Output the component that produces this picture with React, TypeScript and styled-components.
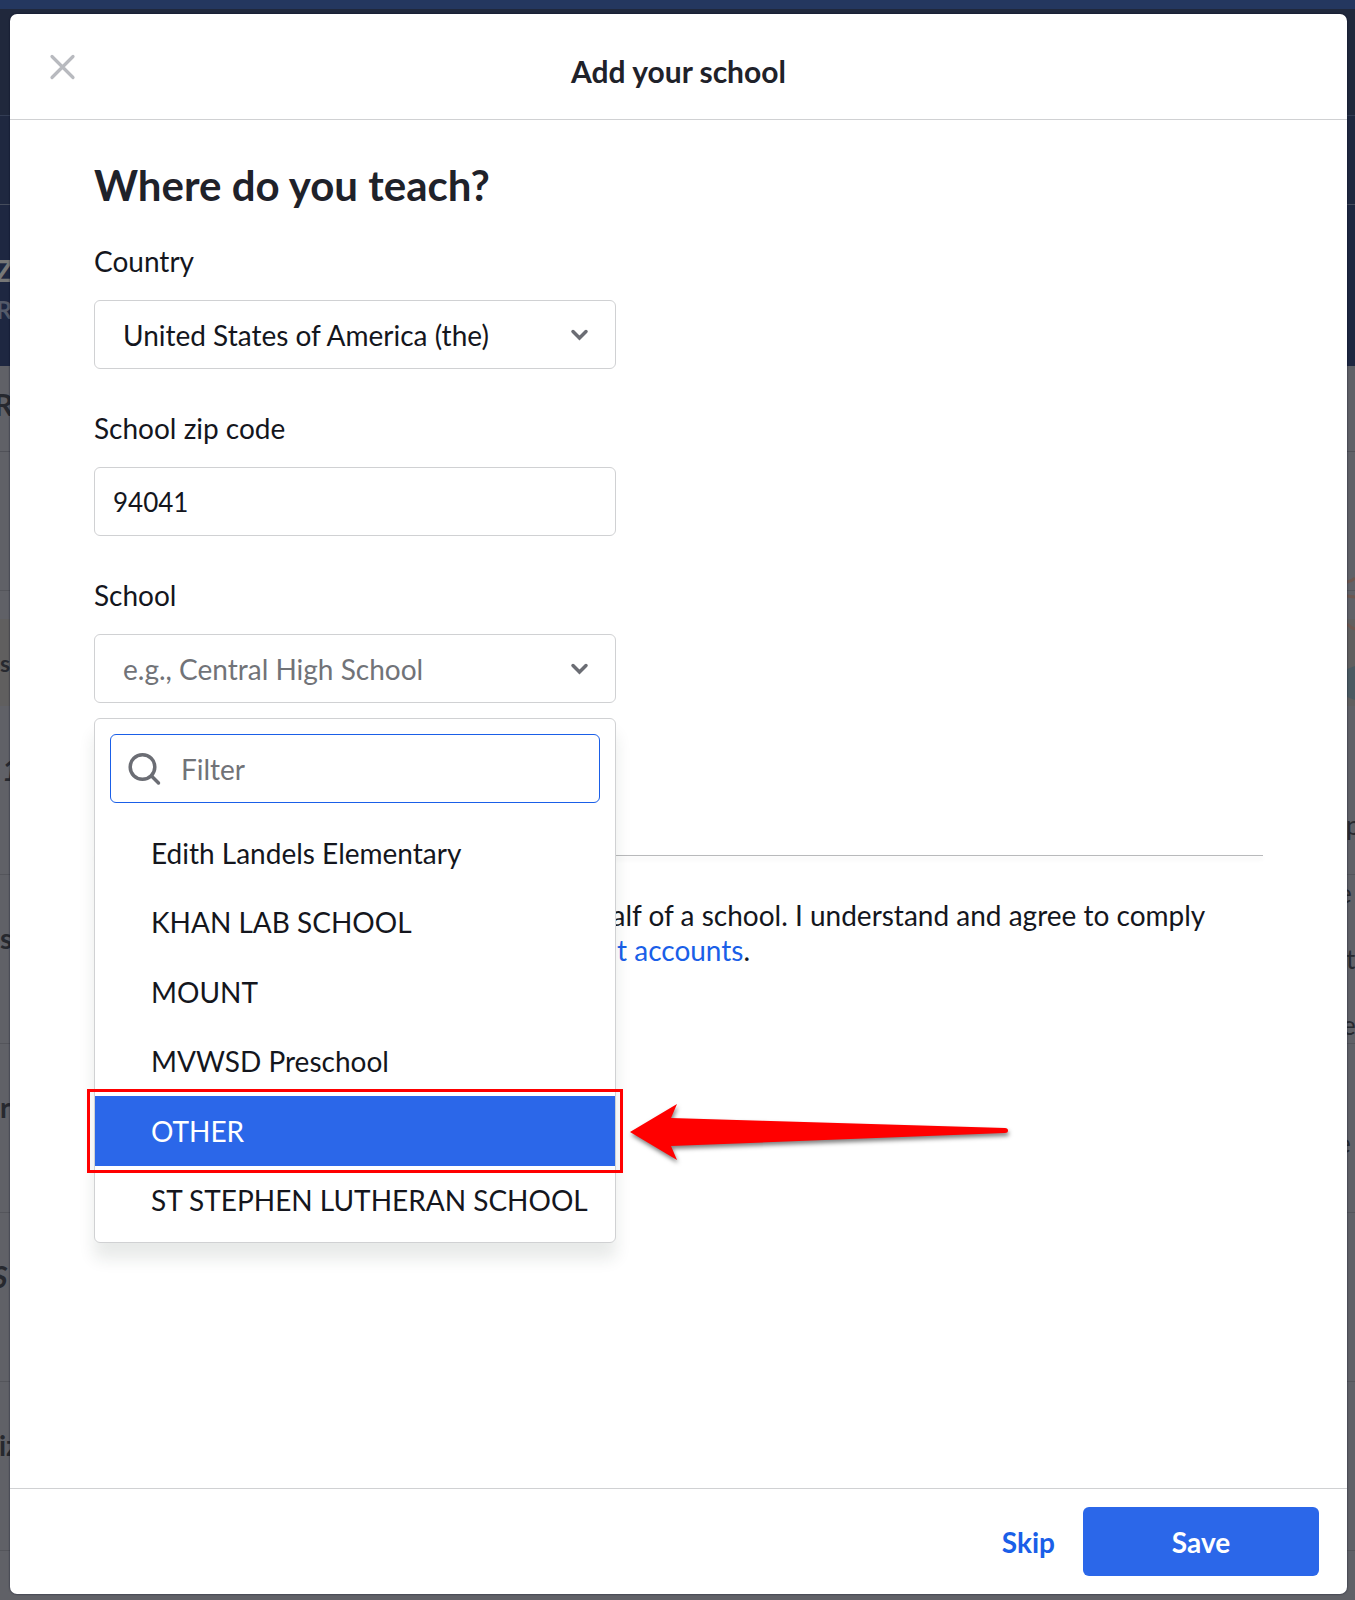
import React, { useState } from "react";
import styled, { createGlobalStyle, css } from "styled-components";

const color = {
  ink: "#1f222a",
  text: "#14161d",
  muted: "#717378",
  icon: "#6b6d74",
  line: "#d0d1d3",
  blue: "#2b67e9",
  link: "#1a5fe8",
  red: "#ff0000",
};

const GlobalStyle = createGlobalStyle`
  *, *::before, *::after { box-sizing: border-box; }
  body { margin: 0; background: #606167; }
  body, button, input, select { font-family: Lato, "Liberation Sans", sans-serif; }
`;

const Page = styled.div`
  position: relative;
  display: flex;
  min-height: 100vh;
  padding: 14px 8px 6px 10px;
  color: ${color.text};
  font-size: 28px;
  line-height: 34px;
`;

/* Dimmed page behind the dialog */
const Backdrop = styled.div`
  position: absolute;
  inset: 0;
  overflow: hidden;
  background: #606167;
`;

const Band = styled.div<{ $height: number; $bg: string; $rule?: string }>`
  display: flex;
  height: ${(p) => p.$height}px;
  background: ${(p) => p.$bg};
  border-bottom: ${(p) => (p.$rule ? `1px solid ${p.$rule}` : "none")};
`;

const Rail = styled.div<{ $side: "left" | "right" }>`
  display: flex;
  flex-direction: column;
  width: ${(p) => (p.$side === "left" ? 10 : 8)}px;
  margin-left: ${(p) => (p.$side === "left" ? "0" : "auto")};
  overflow: hidden;
`;

const Snippet = styled.span<{
  $top: number;
  $size: number;
  $tone: string;
  $shift?: number;
  $bold?: boolean;
  $italic?: boolean;
}>`
  margin-top: ${(p) => p.$top}px;
  margin-left: ${(p) => p.$shift ?? 0}px;
  color: ${(p) => p.$tone};
  font-size: ${(p) => p.$size}px;
  font-weight: ${(p) => (p.$bold ? 700 : 400)};
  font-style: ${(p) => (p.$italic ? "italic" : "normal")};
  line-height: 30px;
  white-space: nowrap;
`;

const Dialog = styled.section`
  position: relative;
  display: flex;
  flex: 1;
  flex-direction: column;
  min-width: 0;
  background: #fff;
  border-radius: 7px;
  box-shadow: 0 0 2px rgba(0, 5, 30, 0.8);
`;

const Header = styled.header`
  display: grid;
  grid-template-columns: 48px 1fr 48px;
  align-items: center;
  height: 106px;
  padding: 0 28px;
  border-bottom: 1px solid ${color.line};
`;

const Title = styled.h1`
  margin: 0;
  padding-top: 8px;
  color: ${color.ink};
  font-size: 30px;
  font-weight: 700;
  line-height: 34px;
  text-align: center;
`;

const IconButton = styled.button`
  display: grid;
  place-items: center;
  width: 48px;
  height: 48px;
  padding: 0;
  background: none;
  border: 0;
  cursor: pointer;
`;

const Body = styled.div`
  flex: 1;
  padding: 40px 84px;
`;

const Heading = styled.h2`
  margin: 0 0 34px;
  color: ${color.ink};
  font-size: 42px;
  font-weight: 700;
  line-height: 50px;
`;

const Fields = styled.div`
  display: flex;
  flex-direction: column;
  gap: 42px;
  max-width: 522px;
`;

const Field = styled.div`
  position: relative;
  display: flex;
  flex-direction: column;
  gap: 22px;
`;

const boxed = css`
  width: 100%;
  height: 69px;
  margin: 0;
  color: ${color.text};
  font-size: 28px;
  background: #fff;
  border: 1px solid ${color.line};
  border-radius: 6px;
  outline: none;
`;

const TextInput = styled.input`
  ${boxed}
  padding: 0 18px;
  font-size: 26px;
`;

const SelectWrap = styled.div`
  display: grid;
  align-items: center;

  > * {
    grid-area: 1 / 1;
  }
  > svg {
    justify-self: end;
    margin-right: 24px;
    pointer-events: none;
  }
`;

const Select = styled.select<{ $empty?: boolean }>`
  ${boxed}
  padding: 0 64px 0 28px;
  appearance: none;
  color: ${(p) => (p.$empty ? color.muted : color.text)};
`;

const Menu = styled.div`
  position: absolute;
  z-index: 1;
  top: calc(100% + 15px);
  left: 0;
  right: 0;
  padding: 15px 0 7px;
  background: #fff;
  border: 1px solid ${color.line};
  border-radius: 6px;
  box-shadow: 0 16px 16px rgba(33, 50, 44, 0.1);
`;

const FilterBox = styled.label`
  display: flex;
  align-items: center;
  gap: 20px;
  height: 69px;
  margin: 0 15px 15px;
  padding: 0 16px;
  border: 1px solid ${color.link};
  border-radius: 6px;
`;

const FilterInput = styled.input`
  flex: 1;
  min-width: 0;
  padding: 0;
  color: ${color.text};
  font-size: 28px;
  background: none;
  border: 0;
  outline: none;

  &::placeholder {
    color: ${color.muted};
    opacity: 1;
  }
`;

const Options = styled.ul`
  display: grid;
  grid-template-rows: repeat(6, 1fr);
  height: 417px;
  margin: 0;
  padding: 0;
  list-style: none;
`;

const Option = styled.li<{ $active: boolean }>`
  position: relative;
  display: flex;
  align-items: center;
  padding: 0 24px 0 56px;
  color: ${(p) => (p.$active ? "#fff" : color.text)};
  background: ${(p) => (p.$active ? color.blue : "transparent")};
  white-space: nowrap;
  cursor: pointer;
`;

const Highlight = styled.span`
  position: absolute;
  inset: -7px -8px;
  border: 3px solid ${color.red};
`;

const Arrow = styled.svg`
  position: absolute;
  top: 50%;
  left: calc(100% + 14px);
  transform: translateY(-50%);
  overflow: visible;
  filter: drop-shadow(1px 3px 2px rgba(0, 0, 0, 0.5));
`;

const Divider = styled.hr`
  height: 1px;
  margin: 152px 0 42px;
  background: #b8b9bb;
  border: 0;
  box-shadow: 0 3px 4px rgba(0, 0, 0, 0.1);
`;

const Consent = styled.div`
  display: flex;
  gap: 15px;
  line-height: 35px;
`;

const Checkbox = styled.input`
  flex: none;
  width: 32px;
  height: 32px;
  margin: 1px 0;
`;

const Link = styled.a`
  color: ${color.link};
  text-decoration: none;
`;

const Footer = styled.footer`
  display: flex;
  align-items: center;
  justify-content: flex-end;
  gap: 28px;
  height: 106px;
  padding: 0 28px;
  border-top: 1px solid ${color.line};
`;

const Button = styled.button<{ $primary?: boolean }>`
  height: 69px;
  min-width: ${(p) => (p.$primary ? 236 : 0)}px;
  padding: 0;
  color: ${(p) => (p.$primary ? "#fff" : color.link)};
  font-size: 28px;
  font-weight: 700;
  background: ${(p) => (p.$primary ? color.blue : "none")};
  border: 0;
  border-radius: 6px;
  cursor: pointer;
`;

const Chevron = () => (
  <svg width="24" height="24" viewBox="0 0 24 24" fill="none" stroke={color.icon} strokeWidth="3.5" strokeLinecap="round" aria-hidden="true">
    <path d="M5 8.500 11.500 15l6.500-6.500" />
  </svg>
);

const schools = [
  "Edith Landels Elementary",
  "KHAN LAB SCHOOL",
  "MOUNT",
  "MVWSD Preschool",
  "OTHER",
  "ST STEPHEN LUTHERAN SCHOOL",
];

const dim = "#27292f";

function DimmedPage() {
  return (
    <Backdrop aria-hidden="true">
      <Band $height={9} $bg="#24375f" />
      <Band $height={107} $bg="#20283c" $rule="#333d54" />
      <Band $height={89} $bg="#1f2840" $rule="#454c5c" />
      <Band $height={161} $bg="#1e2741">
        <Rail $side="left">
          <Snippet $top={50} $size={30} $shift={-5} $tone="#777777" $bold>Z</Snippet>
          <Snippet $top={9} $size={25} $shift={-4} $tone="#545a69" $bold>R</Snippet>
        </Rail>
      </Band>
      <Band $height={86} $bg="#606167" $rule="#505158">
        <Rail $side="left">
          <Snippet $top={23} $size={30} $shift={-6} $tone={dim} $bold>R</Snippet>
        </Rail>
      </Band>
      <Band $height={139} $bg="#606167" $rule="#54555b">
        <Rail $side="right">
          <svg width="8" height="138" fill="none" stroke="#6d5750" strokeWidth="3">
            <path d="M0 130q5-1 8-4" />
          </svg>
        </Rail>
      </Band>
      <Band $height={28} $bg="#606167">
        <Rail $side="right">
          <svg width="8" height="28" fill="none" stroke="#6d5750" strokeWidth="3">
            <path d="M0 5l8 1" />
          </svg>
        </Rail>
      </Band>
      <Band $height={87} $bg="#605f5f">
        <Rail $side="left">
          <Snippet $top={29} $size={23} $tone={dim} $bold>s</Snippet>
        </Rail>
        <Rail $side="right">
          <svg width="8" height="87" fill="none">
            <path d="M0 5q4 4 8 5" stroke="#6d5750" strokeWidth="3" />
            <path d="M0 50 8 47v34l-8-3z" fill="#4b5a62" />
          </svg>
        </Rail>
      </Band>
      <Band $height={169} $bg="#606167" $rule="#54555b">
        <Rail $side="left">
          <Snippet $top={48} $size={30} $shift={2} $tone={dim} $bold $italic>1</Snippet>
        </Rail>
        <Rail $side="right">
          <Snippet $top={104} $size={26} $shift={-1} $tone={dim}>p</Snippet>
        </Rail>
      </Band>
      <Band $height={169} $bg="#606167" $rule="#54555b">
        <Rail $side="left">
          <Snippet $top={48} $size={28} $tone={dim} $bold>s</Snippet>
        </Rail>
        <Rail $side="right">
          <Snippet $top={3} $size={26} $shift={-9} $tone={dim}>e</Snippet>
          <Snippet $top={36} $size={26} $shift={-1} $tone={dim}>t</Snippet>
          <Snippet $top={36} $size={26} $shift={-5} $tone={dim}>e</Snippet>
        </Rail>
      </Band>
      <Band $height={169} $bg="#606167" $rule="#54555b">
        <Rail $side="left">
          <Snippet $top={48} $size={28} $tone={dim} $bold>r</Snippet>
        </Rail>
        <Rail $side="right">
          <Snippet $top={84} $size={26} $shift={-10} $tone={dim}>e</Snippet>
        </Rail>
      </Band>
      <Band $height={169} $bg="#606167" $rule="#54555b">
        <Rail $side="left">
          <Snippet $top={48} $size={30} $shift={-8} $tone={dim} $bold $italic>S</Snippet>
        </Rail>
      </Band>
      <Band $height={169} $bg="#606167" $rule="#54555b">
        <Rail $side="left">
          <Snippet $top={48} $size={28} $shift={-1} $tone={dim} $bold>iz</Snippet>
        </Rail>
      </Band>
    </Backdrop>
  );
}

export default function App() {
  const [zip, setZip] = useState("94041");
  const [filter, setFilter] = useState("");
  const [agreed, setAgreed] = useState(false);
  const visible = schools.filter((s) => s.toLowerCase().includes(filter.toLowerCase()));

  return (
    <>
      <GlobalStyle />
      <Page>
        <DimmedPage />
        <Dialog role="dialog" aria-labelledby="dialog-title">
          <Header>
            <IconButton type="button" aria-label="Close">
              <svg width="28" height="28" viewBox="0 0 28 28" fill="none" stroke="#b8babf" strokeWidth="3.2" strokeLinecap="round">
                <path d="M4 3.500l21 21M25 3.500l-21 21" />
              </svg>
            </IconButton>
            <Title id="dialog-title">Add your school</Title>
          </Header>

          <Body>
            <Heading>Where do you teach?</Heading>
            <Fields>
              <Field>
                <label htmlFor="country">Country</label>
                <SelectWrap>
                  <Select id="country" defaultValue="us">
                    <option value="us">United States of America (the)</option>
                  </Select>
                  <Chevron />
                </SelectWrap>
              </Field>
              <Field>
                <label htmlFor="zip">School zip code</label>
                <TextInput id="zip" value={zip} onChange={(e) => setZip(e.target.value)} />
              </Field>
              <Field>
                <label htmlFor="school">School</label>
                <SelectWrap>
                  <Select id="school" defaultValue="" $empty>
                    <option value="">e.g., Central High School</option>
                  </Select>
                  <Chevron />
                </SelectWrap>
                <Menu>
                  <FilterBox>
                    <svg width="34" height="34" viewBox="0 0 34 34" fill="none" stroke={color.icon} strokeWidth="3.5" strokeLinecap="round" aria-hidden="true">
                      <circle cx="15.5" cy="15" r="12.3" />
                      <path d="M24.500 24l7 7" />
                    </svg>
                    <FilterInput aria-label="Filter" placeholder="Filter" value={filter} onChange={(e) => setFilter(e.target.value)} />
                  </FilterBox>
                  <Options role="listbox" aria-label="School">
                    {visible.map((school) => {
                      const active = school === "OTHER";
                      return (
                        <Option key={school} role="option" aria-selected={active} $active={active}>
                          {school}
                          {active && (
                            <>
                              <Highlight />
                              <Arrow width="380" height="56" viewBox="0 0 380 56" aria-hidden="true">
                                <path d="M1 29 48 1l-6 14 334 10q3 0 3 2.500t-3 2.500L42 43l6 14z" fill={color.red} />
                              </Arrow>
                            </>
                          )}
                        </Option>
                      );
                    })}
                  </Options>
                </Menu>
              </Field>
            </Fields>

            <Divider />
            <Consent>
              <Checkbox id="consent" type="checkbox" checked={agreed} onChange={(e) => setAgreed(e.target.checked)} />
              <label htmlFor="consent">
                I am registering Khan Academy on behalf of a school. I understand and agree to comply
                <br />
                with the requirements for using <Link href="#accounts">student accounts</Link>.
              </label>
            </Consent>
          </Body>

          <Footer>
            <Button type="button">Skip</Button>
            <Button type="button" $primary>Save</Button>
          </Footer>
        </Dialog>
      </Page>
    </>
  );
}
